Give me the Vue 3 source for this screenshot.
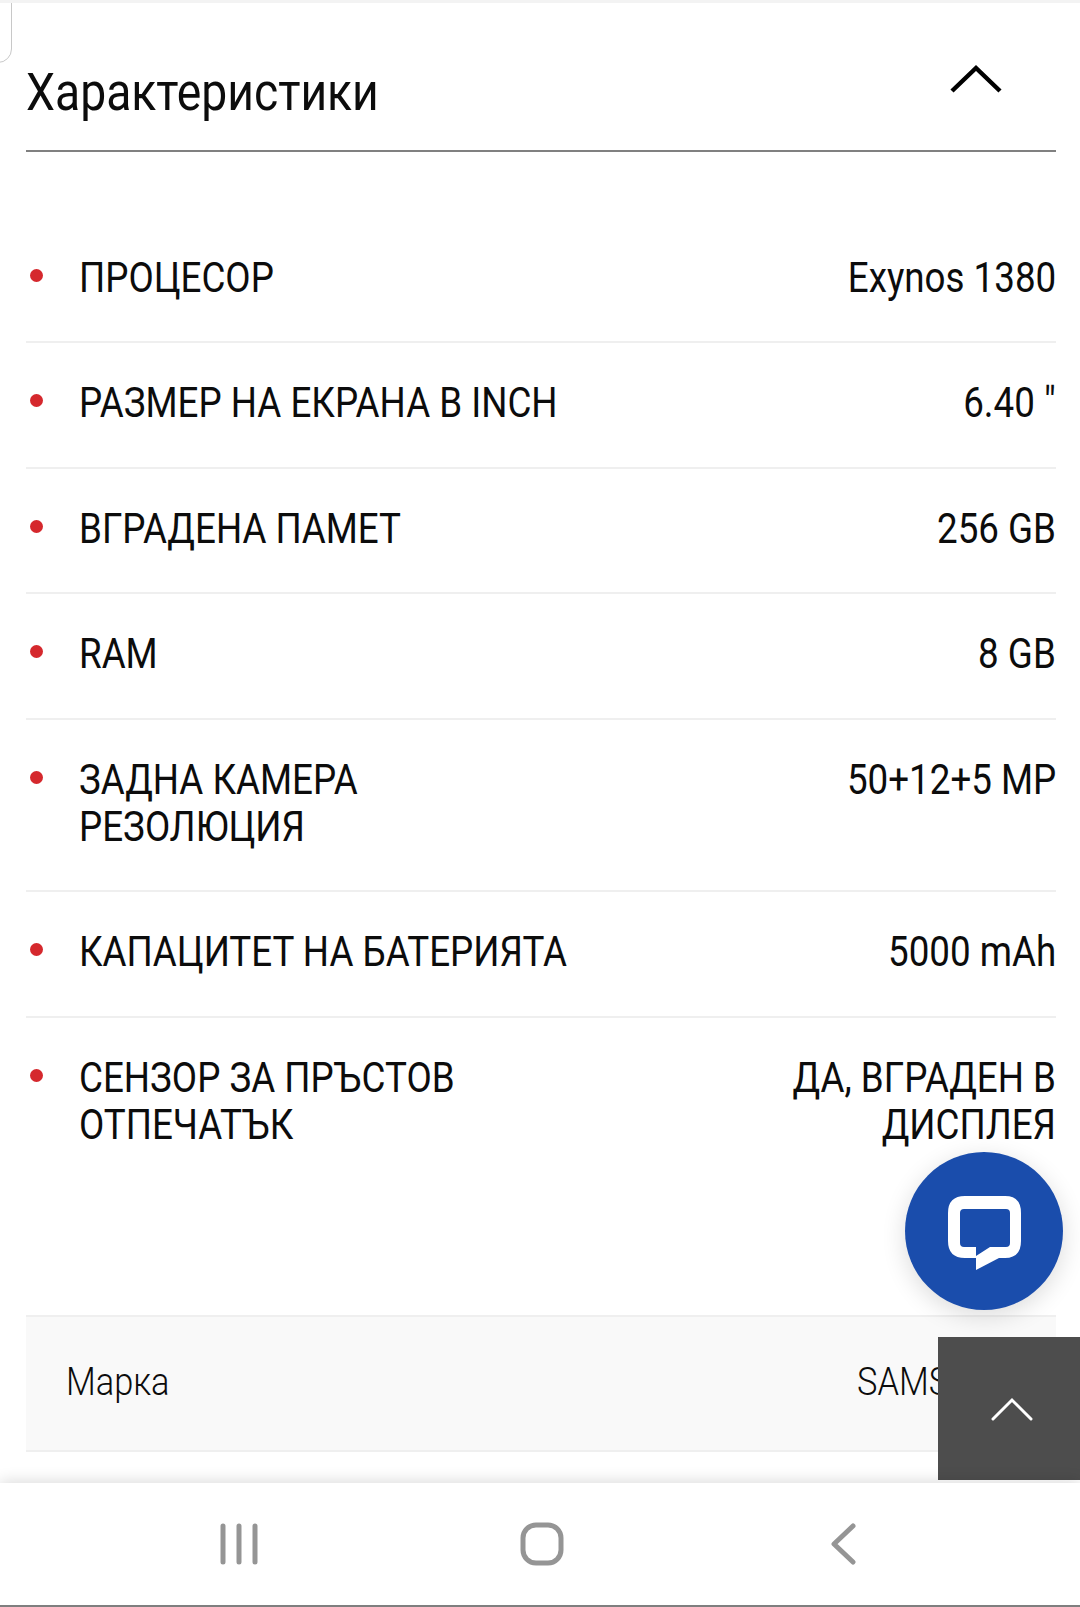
<script setup>
const specs = [
  { label: "ПРОЦЕСОР", value: "Exynos 1380" },
  { label: "РАЗМЕР НА ЕКРАНА В INCH", value: '6.40 "' },
  { label: "ВГРАДЕНА ПАМЕТ", value: "256 GB" },
  { label: "RAM", value: "8 GB" },
  { label: "ЗАДНА КАМЕРА\nРЕЗОЛЮЦИЯ", value: "50+12+5 MP" },
  { label: "КАПАЦИТЕТ НА БАТЕРИЯТА", value: "5000 mAh" },
  { label: "СЕНЗОР ЗА ПРЪСТОВ\nОТПЕЧАТЪК", value: "ДА, ВГРАДЕН В\nДИСПЛЕЯ" },
];
</script>

<template>
  <div class="page">
    <div class="corner"></div>

    <section class="content">
      <header class="head">
        <h2 class="title">Характеристики</h2>
        <svg class="chevron" width="54" height="30" viewBox="0 0 54 30">
          <path d="M3 27 L27 4 L51 27" fill="none" stroke="#000" stroke-width="4.5" />
        </svg>
      </header>

      <ul class="specs">
        <li v-for="item in specs" :key="item.label" class="spec">
          <span class="dot"></span>
          <span class="label">{{ item.label }}</span>
          <span class="value">{{ item.value }}</span>
        </li>
      </ul>

      <div class="brand">
        <span class="brand-name">Марка</span>
        <span class="brand-value">SAMSUNG</span>
      </div>
    </section>

    <button class="chat">
      <svg class="chat-icon" width="74" height="74" viewBox="0 0 74 74">
        <path
          fill="#fff"
          fill-rule="evenodd"
          d="M17 0 H57 Q73 0 73 17 V45 Q73 62 57 62 H51 L28 74 V62 H17 Q0 62 0 45 V17 Q0 0 17 0 Z M16 13 Q12 13 12 17 V47 Q12 51 16 51 H28 V60 L42 51 H58 Q62 51 62 47 V17 Q62 13 58 13 Z"
        />
      </svg>
    </button>

    <button class="to-top">
      <svg width="42" height="26" viewBox="0 0 42 26">
        <path d="M2 23 L21 4 L40 23" fill="none" stroke="#fff" stroke-width="3" stroke-linecap="round" />
      </svg>
    </button>

    <nav class="navbar">
      <svg width="40" height="42" viewBox="0 0 40 42">
        <path d="M4 3 V39 M20 3 V39 M36 3 V39" stroke="#959595" stroke-width="5" stroke-linecap="round" />
      </svg>
      <svg width="44" height="44" viewBox="0 0 44 44">
        <rect x="3" y="3" width="38" height="38" rx="13" fill="none" stroke="#959595" stroke-width="5" />
      </svg>
      <svg width="26" height="42" viewBox="0 0 26 42">
        <path d="M23 3 L4 21 L23 39" fill="none" stroke="#959595" stroke-width="5" stroke-linecap="round" stroke-linejoin="round" />
      </svg>
    </nav>
  </div>
</template>

<style>
html,
body {
  margin: 0;
  background: #fff;
}
</style>

<style scoped>
.page {
  position: relative;
  width: 1080px;
  height: 1607px;
  overflow: hidden;
  background: #fff;
  color: #0c0c0c;
  font-family: Roboto, "Liberation Sans", sans-serif;
  border-top: 3px solid #f3f3f3;
  box-sizing: border-box;
}

.corner {
  position: absolute;
  top: -20px;
  left: -20px;
  width: 30px;
  height: 78px;
  border: 1px solid #c8c8c8;
  border-radius: 0 0 14px 0;
}

.content {
  padding: 0 24px 0 26px;
}

.head {
  display: flex;
  justify-content: space-between;
  height: 149px;
  border-bottom: 2px solid #808080;
  box-sizing: border-box;
  margin-bottom: 65.5px;
}

.title {
  margin: 60px 0 0;
  font-size: 51px;
  line-height: 60px;
  font-weight: 400;
  white-space: nowrap;
  transform: scaleX(0.907);
  transform-origin: left center;
}

.chevron {
  margin: 61px 53px 0 0;
}

.specs {
  margin: 0;
  padding: 0;
  list-style: none;
}

.spec {
  display: flex;
  align-items: flex-start;
  padding: 36px 0 40.5px;
  border-bottom: 2px solid #efefef;
  font-size: 42px;
  line-height: 47px;
}

.spec:last-child {
  border-bottom: 0;
}

.dot {
  flex: none;
  width: 13px;
  height: 13px;
  margin: 15px 0 0 4px;
  border-radius: 50%;
  background: #d5282d;
}

.label,
.value {
  white-space: pre-line;
  transform: scaleX(0.875);
}

.label {
  margin-left: 36px;
  transform-origin: left center;
}

.value {
  margin-left: auto;
  text-align: right;
  transform-origin: right center;
}

.brand {
  display: flex;
  justify-content: space-between;
  align-items: center;
  height: 137px;
  margin-top: 127px;
  padding: 0 36px 3px 40px;
  box-sizing: border-box;
  background: #f9f9f9;
  border-top: 2px solid #efefef;
  border-bottom: 2px solid #efefef;
  font-size: 38px;
  font-weight: 300;
}

.brand-name {
  transform: scaleX(0.905);
  transform-origin: left center;
}

.brand-value {
  transform: scaleX(0.905);
  transform-origin: right center;
}

.chat {
  position: absolute;
  left: 905px;
  top: 1149px;
  display: flex;
  align-items: center;
  justify-content: center;
  width: 158px;
  height: 158px;
  padding: 0 0 0 2px;
  border: 0;
  border-radius: 50%;
  background: #1a4dac;
  box-shadow: 0 6px 24px rgba(0, 0, 0, 0.14);
}

.chat-icon {
  margin-top: 4px;
}

.to-top {
  position: absolute;
  right: 0;
  top: 1334px;
  display: flex;
  justify-content: center;
  padding: 59px 0 0 5px;
  width: 142px;
  height: 143px;
  border: 0;
  background: #4d4d4d;
  box-sizing: border-box;
}

.navbar {
  position: absolute;
  left: 0;
  right: 0;
  bottom: 0;
  display: flex;
  align-items: center;
  justify-content: space-between;
  height: 124px;
  padding: 0 224px 0 219px;
  box-sizing: border-box;
  background: #fff;
  border-bottom: 2px solid #7f7f7f;
  box-shadow: 0 -2px 14px rgba(0, 0, 0, 0.14);
}

.navbar svg:nth-child(2) {
  margin-right: 6px;
}
</style>
